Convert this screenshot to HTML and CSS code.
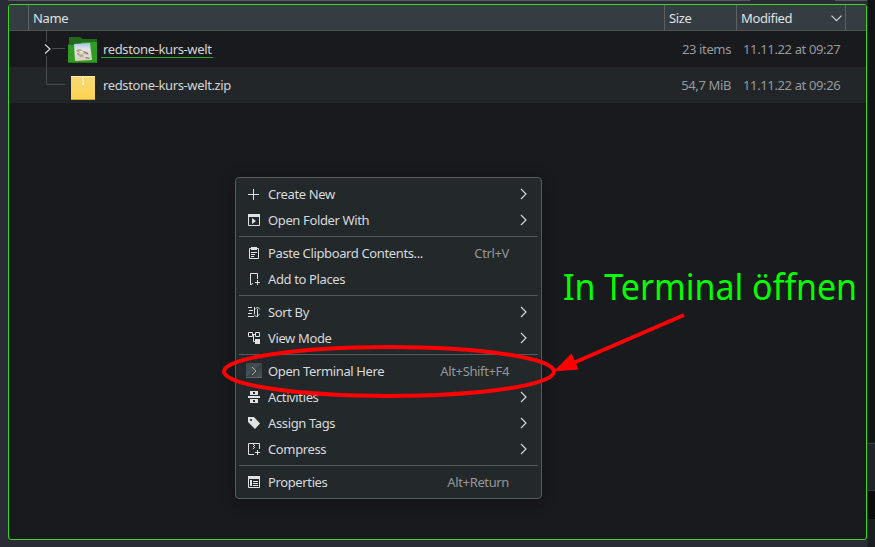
FILE: index.html
```html
<!DOCTYPE html>
<html lang="en">
<head>
<meta charset="utf-8">
<title>File manager</title>
<link rel="stylesheet" href="styles.css">
</head>
<body>
<div class="window">
  <div class="topstrip"><i class="wide"></i><i class="narrow"></i></div>
  <main class="panel">
    <header class="columns">
      <span class="gutter"></span>
      <span class="col name">Name</span>
      <span class="col size">Size</span>
      <span class="col modified">Modified
        <svg width="11" height="7" viewBox="0 0 11 7"><path d="M.5.7 5.5 5.7 10.500.7" class="stroke"/></svg>
      </span>
      <span class="col rest"></span>
    </header>
    <div class="row">
      <svg class="tree" width="60" height="36" viewBox="0 0 60 36"><path d="M37.500 0V11M37.500 25V36M43 17.500H56" class="branch"/><path d="M36 13.500 41 18 36 22.500" class="stroke"/></svg>
      <svg class="fileicon" width="29" height="36" viewBox="0 0 29 36">
        <defs><linearGradient id="photo" x2="0" y2="1"><stop stop-color="#a9c4ee"/><stop offset=".35" stop-color="#e3e3e5"/><stop offset="1" stop-color="#d8d0bd"/></linearGradient></defs>
        <path d="M1 6H12L15 8H29V20H0V13H1Z" fill="#21691a"/>
        <path d="M0 14H11L14 11H29V32H0Z" fill="#319c22"/><path d="M0 31H29V32H0Z" fill="#247918"/>
        <path d="M6 13 22 12 24 29 7 30Z" fill="url(#photo)"/>
        <path d="M8 19 12 18 15 20 19 21 21 24 17 23 13 22 9 21ZM10 24 14 23 17 26 12 26Z" fill="#b9a98c"/><path d="M15 20 20 22 20 23 17 22ZM18 26 22 27 21 28 17 27ZM9 22 12 23 10 24Z" fill="#8b7c68"/>
        <path d="M11 20 14 20 16 22 13 22ZM14 25 18 25 18 26Z" fill="#f1eadb"/>
      </svg>
      <span class="filename linked">redstone-kurs-welt</span>
      <span class="filesize">23 items</span>
      <span class="filedate">11.11.22 at 09:27</span>
    </div>
    <div class="row alt">
      <svg class="tree" width="60" height="36" viewBox="0 0 60 36"><path d="M37.500 0V17.500H56" class="branch"/></svg>
      <svg class="fileicon" width="29" height="36" viewBox="0 0 29 36">
        <defs><linearGradient id="zip" x2="0" y2="1"><stop stop-color="#f8d978"/><stop offset="1" stop-color="#fdd44f"/></linearGradient></defs>
        <path d="M3 9H27V33H3Z" fill="url(#zip)"/><path d="M3 9H27V10H3Z" fill="#ffe9a8"/><path d="M3 32H27V33H3Z" fill="#c9a43e"/>
        <path d="M14 10h1v1h-1zM15 11h1v1h-1zM14 12h1v1h-1zM15 13h1v1h-1zM14 14h1v1h-1zM15 15h1v1h-1zM14 16h2v2h-2z" fill="#fff8df"/>
      </svg>
      <span class="filename">redstone-kurs-welt.zip</span>
      <span class="filesize">54,7 MiB</span>
      <span class="filedate">11.11.22 at 09:26</span>
    </div>
  </main>
  <aside class="backdrop"><i class="upper"></i><i class="box"></i><i class="dark"></i></aside>
</div>

<nav class="menu">
  <div class="item"><svg class="icon" viewBox="0 0 16 16"><path d="M7.500 3V14M2 8.500H13" class="line"/></svg><span>Create New</span><svg class="chev" viewBox="0 0 7 12"><path d="M1 1 6 6 1 11" class="stroke"/></svg></div>
  <div class="item"><svg class="icon" viewBox="0 0 16 16"><path d="M2.500 2.500H13.500V13.500H2.500Z" class="line"/><path d="M2 2H14V5H2ZM6 6 10 9 6 12Z" class="solid"/></svg><span>Open Folder With</span><svg class="chev" viewBox="0 0 7 12"><path d="M1 1 6 6 1 11" class="stroke"/></svg></div>
  <hr>
  <div class="item"><svg class="icon" viewBox="0 0 16 16"><path d="M3.500 3.500H12.500V13.500H3.500ZM5 7.500H11M5 9.500H9M5 11.500H8" class="line"/><path d="M5 2H11V5H5Z" class="solid"/></svg><span>Paste Clipboard Contents...</span><kbd>Ctrl+V</kbd></div>
  <div class="item"><svg class="icon" viewBox="0 0 16 16"><path d="M11.500 8V2.500H4.500V13M4 13.500H6M6 12.500H7M11.500 9V14M9 11.500H14" class="line"/></svg><span>Add to Places</span></div>
  <hr>
  <div class="item"><svg class="icon" viewBox="0 0 16 16"><path d="M2 3.500H6M3 6.500H7M2 9.500H6M2 12.500H8M8.500 3V10M11.500 5V13" class="line"/><path d="M9 5.500 11.500 3 14 5.500M8 10.500 10.500 13 13.500 10" class="line"/></svg><span>Sort By</span><svg class="chev" viewBox="0 0 7 12"><path d="M1 1 6 6 1 11" class="stroke"/></svg></div>
  <div class="item"><svg class="icon" viewBox="0 0 16 16"><path d="M2.500 2.500H6.500V6.500H2.500ZM9.500 2.500H13.500V6.500H9.500ZM7 4.500H9M7.500 5V11.500H9" class="line"/><path d="M9 9H14V14H9Z" class="solid"/></svg><span>View Mode</span><svg class="chev" viewBox="0 0 7 12"><path d="M1 1 6 6 1 11" class="stroke"/></svg></div>
  <hr>
  <div class="item"><svg class="icon" viewBox="0 0 16 16"><defs><linearGradient id="term" x2="1" y2="1"><stop stop-color="#3d474c"/><stop offset=".48" stop-color="#445055"/><stop offset=".5" stop-color="#344044"/><stop offset="1" stop-color="#485257"/></linearGradient></defs><path d="M0 0H16V15H0Z" fill="url(#term)"/><path d="M0 14H16V15H0Z" fill="#5b6569"/><path d="M6 4 10 8 6 12" class="prompt"/></svg><span>Open Terminal Here</span><kbd>Alt+Shift+F4</kbd></div>
  <div class="item"><svg class="icon" viewBox="0 0 16 16"><path d="M4 2H12V6H4ZM2 7H14V9H2ZM4 10H12V14H4Z" class="solid"/><path d="M7 3H9V5H7ZM7 11H9V13H7Z" class="hole"/></svg><span>Activities</span><svg class="chev" viewBox="0 0 7 12"><path d="M1 1 6 6 1 11" class="stroke"/></svg></div>
  <div class="item"><svg class="icon" viewBox="0 0 16 16"><path d="M2 2H8L14 8.500 9 14 2 7Z" class="solid"/><circle cx="5" cy="5" r="1.100" class="hole"/></svg><span>Assign Tags</span><svg class="chev" viewBox="0 0 7 12"><path d="M1 1 6 6 1 11" class="stroke"/></svg></div>
  <div class="item"><svg class="icon" viewBox="0 0 16 16"><path d="M8 13.500H2.500V2.500H13.500V8M11.500 9V14M9 11.500H14" class="line"/><path d="M7 3h1v1h-1zM8 4h1v1h-1zM7 5h1v1h-1zM8 6h1v1h-1zM7 7h1v1h-1z" class="solid"/></svg><span>Compress</span><svg class="chev" viewBox="0 0 7 12"><path d="M1 1 6 6 1 11" class="stroke"/></svg></div>
  <hr>
  <div class="item"><svg class="icon" viewBox="0 0 16 16"><path d="M2.500 2.500H13.500V13.500H2.500ZM7 7.500H12M7 9.500H12M7 11.500H12" class="line"/><path d="M2 2H14V5H2ZM4 6H6V12H4Z" class="solid"/></svg><span>Properties</span><kbd>Alt+Return</kbd></div>
</nav>

<svg class="annotation" width="875" height="547" viewBox="0 0 875 547">
  <ellipse cx="389" cy="371.500" rx="165" ry="24.500" class="mark"/>
  <path d="M684 315 572 363.500" class="mark"/>
  <path d="M553.500 371.500 571.500 353.500 578.500 369.500Z" fill="#f00"/>
</svg>
<div class="caption">In Terminal öffnen</div>
</body>
</html>
```
FILE: styles.css
```css
* { box-sizing: border-box; }
body { margin: 0; width: 875px; height: 547px; overflow: hidden; background: #292c35; color: #d8dadb; font: 13px/18px "Noto Sans", sans-serif; letter-spacing: -.37px; }
svg { display: block; fill: none; flex: none; }
.window { display: grid; grid-template-columns: 8px 859px 8px; grid-template-rows: 4px 536px; height: 547px; }
.topstrip { grid-column: 2; display: flex; justify-content: space-between; height: 1px; }
.topstrip i { background: #54585d; height: 1px; }
.wide { width: 742px; }
.narrow { width: 32px; }
.panel { grid-column: 2; grid-row: 2; border: 1px solid #3dd425; border-radius: 3px; background: #191a1d; overflow: hidden; }
.columns { display: flex; height: 26px; background: #363d42; border-bottom: 1px solid #4c5256; color: #dfe1e2; }
.gutter { width: 19px; }
.col { border-left: 1px solid #5b6165; padding: 4px 4px 0; }
.name { flex: 1; }
.size { width: 72px; }
.modified { display: flex; justify-content: space-between; width: 109px; padding-right: 3px; }
.modified svg { margin-top: 6px; }
.rest { width: 21px; }
.row { display: flex; align-items: center; height: 36px; color: #d3d5d6; }
.alt { background: #222628; }
.fileicon { margin-right: 6px; }
.tree { margin-right: -1px; }
.filename { position: relative; flex: none; }
.linked::after { content: ""; position: absolute; left: -2px; right: -2px; bottom: 0; height: 1px; background: #2fa41f; }
.filesize { margin-left: auto; color: #96999b; }
.filedate { width: 98px; margin: 0 25px 0 12px; color: #96999b; white-space: nowrap; }
.stroke { stroke: #d3d6d7; stroke-width: 1.2; }
.branch { stroke: #47494c; }
.backdrop { grid-column: 3; grid-row: 1 / 3; height: 547px; background: #1b1e21; display: flex; flex-direction: column; border-left: 1px solid #23272b; }
.upper { height: 442px; background: #121315; }
.box { height: 48px; margin-top: 1px; border-top: 1px solid #3a3d40; border-bottom: 1px solid #34373a; background: #202428; }
.dark { height: 28px; background: #0b0b0b; }
.menu { position: absolute; left: 235px; top: 177px; width: 307px; height: 322px; padding: 3px; border: 1px solid #565b5e; border-radius: 4px; background: #23282b; box-shadow: 0 3px 14px rgba(0, 0, 0, .35); }
.item { display: flex; align-items: center; height: 26px; padding: 0 11px 0 7px; }
.item span { margin-left: 6px; white-space: nowrap; }
.icon { width: 16px; height: 16px; }
.chev { width: 7px; height: 12px; margin-left: auto; margin-bottom: 1px; }
kbd { margin: 0 18px 0 auto; font: inherit; color: #949799; }
hr { height: 1px; margin: 3px 0; border: 0; background: #53585a; }
.line { stroke: #dfe1e2; }
.solid { fill: #dfe1e2; }
.hole { fill: #23282b; }
.prompt { stroke: #aab0b2; }
.annotation { position: absolute; left: 0; top: 0; }
.mark { stroke: #f00; stroke-width: 4; }
.caption { position: absolute; left: 563px; top: 263px; font-size: 36px; line-height: 48px; letter-spacing: 0; color: #0f0; white-space: nowrap; transform: scaleX(.943); transform-origin: left; }
```
